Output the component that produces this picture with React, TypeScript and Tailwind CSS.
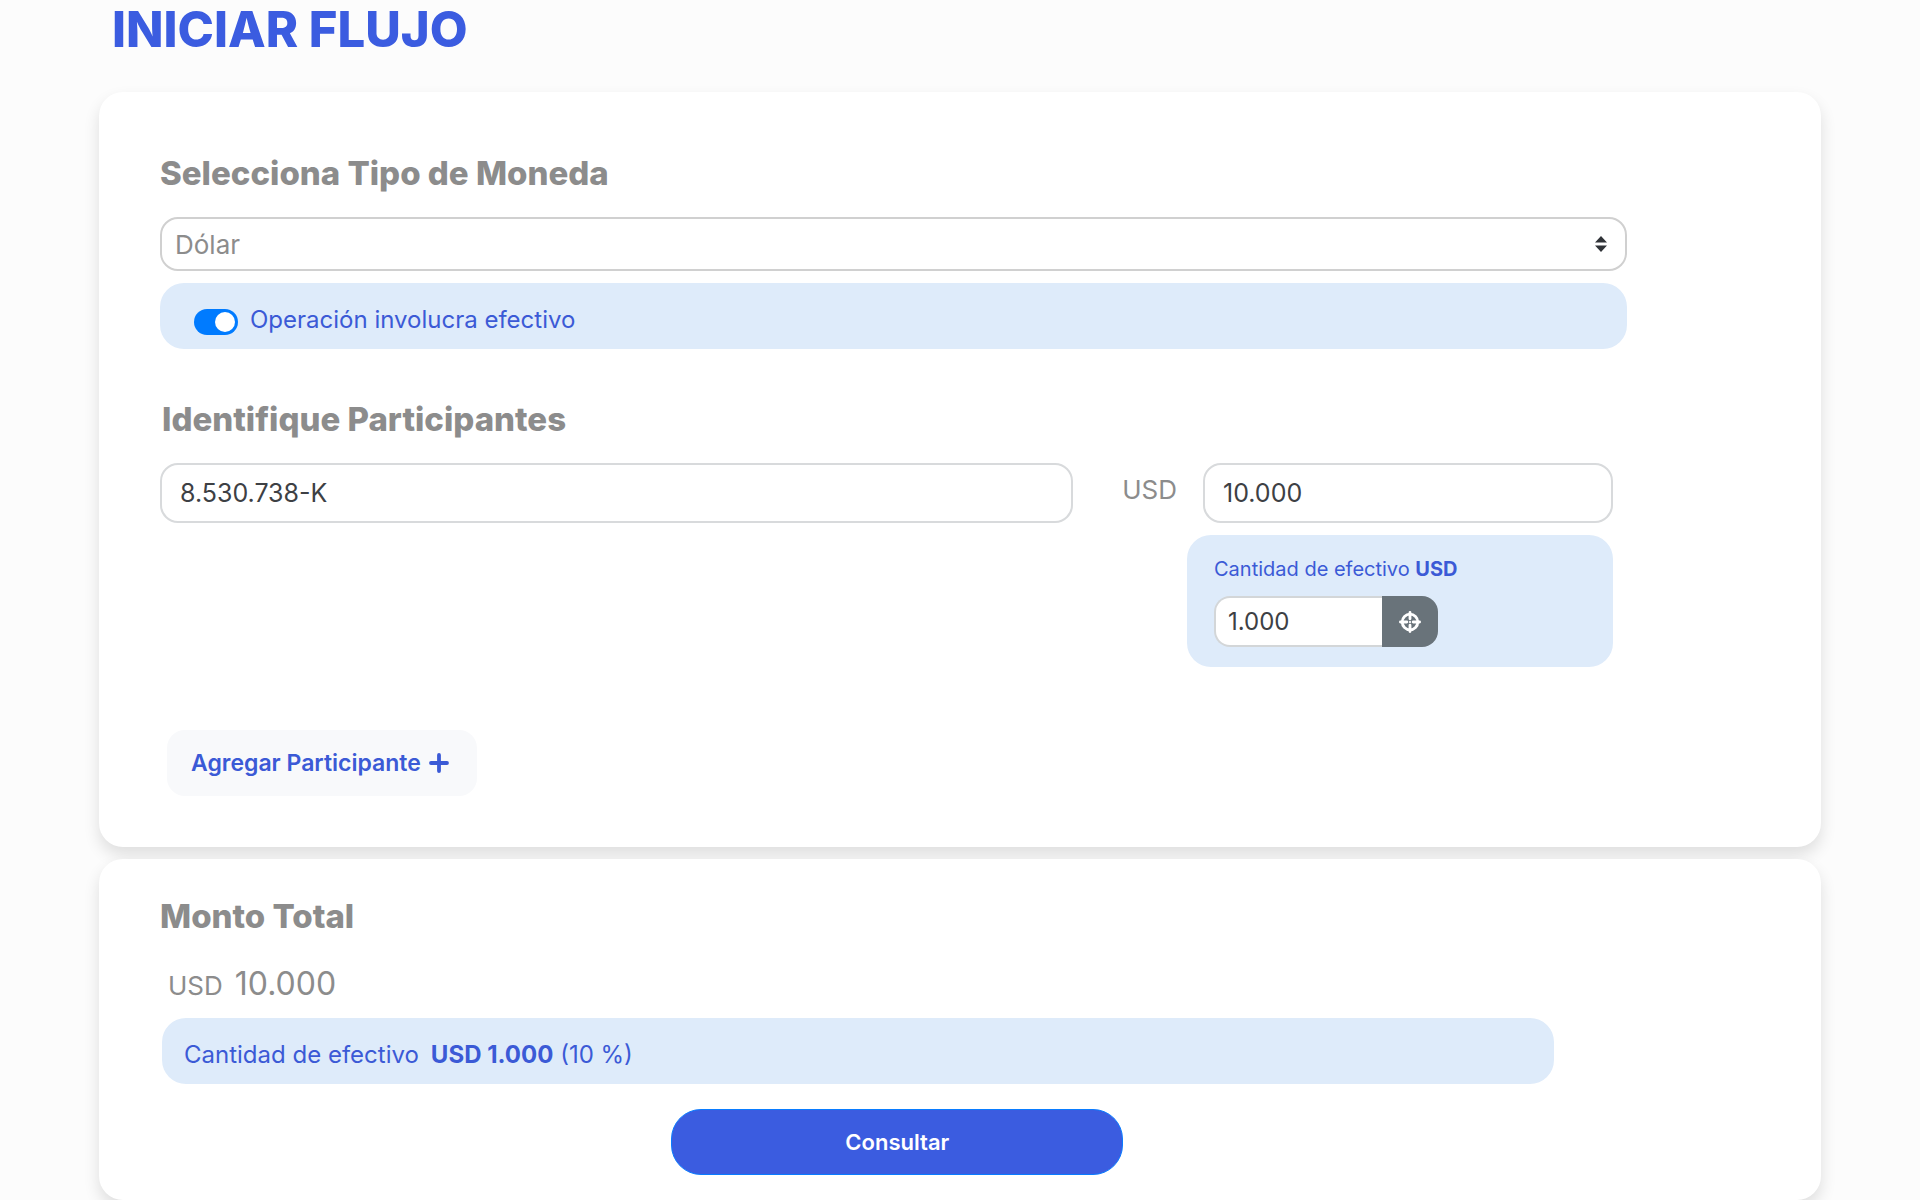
import { useState, type ReactNode } from "react";

function SectionTitle({ children }: { children: ReactNode }) {
  return <h2 className="text-[33px] leading-10 font-extrabold text-[#8c8c8c]">{children}</h2>;
}

function SortArrows() {
  return (
    <svg
      viewBox="0 0 12 16"
      className="pointer-events-none absolute top-1/2 right-5 h-4 w-3 -translate-y-1/2 fill-[#303338]"
      aria-hidden="true"
    >
      <path d="M6 0 12 6.5H0zM0 9.5h12L6 16z" />
    </svg>
  );
}

function Crosshair() {
  return (
    <svg viewBox="0 0 22 22" className="size-[22px] fill-none stroke-white" aria-hidden="true">
      <circle cx="11" cy="11" r="7.8" strokeWidth="2.8" />
      <path d="M11 1.4v6.4M11 14.2v6.4M1.4 11h6.4M14.2 11h6.4" strokeWidth="2.8" strokeLinecap="round" />
      <circle cx="11" cy="11" r=".8" className="fill-white" strokeWidth="1" />
    </svg>
  );
}

function Plus() {
  return (
    <svg viewBox="0 0 20 20" className="size-5 fill-none stroke-current" aria-hidden="true">
      <path d="M10 2v16M2 10h16" strokeWidth="3.8" strokeLinecap="round" />
    </svg>
  );
}

export default function App() {
  const [cash, setCash] = useState(true);

  return (
    <div className="min-h-screen overflow-hidden bg-[#fcfcfc] px-[99px] font-['Inter',sans-serif] text-[#8c8c8c]">
      <h1 className="pl-[13px] text-[49px] leading-[60px] font-extrabold text-[#3b5ce0]">INICIAR FLUJO</h1>

      <form onSubmit={(e) => e.preventDefault()} className="mt-8 flex flex-col gap-3">
        <section className="rounded-3xl bg-white px-[61px] pt-[61px] pb-[51px] shadow-[0_8px_16px_rgba(0,0,0,0.12)]">
          <SectionTitle>
            <label htmlFor="currency">Selecciona Tipo de Moneda</label>
          </SectionTitle>
          <div className="relative mt-6 w-11/12">
            <select
              id="currency"
              defaultValue="usd"
              className="h-[54px] w-full appearance-none rounded-[18px] border-2 border-[#d0d0d0] bg-white px-[13px] text-[26px] text-[#8c8c8c]"
            >
              <option value="usd">Dólar</option>
              <option value="clp">Peso</option>
            </select>
            <SortArrows />
          </div>
          <label className="mt-3 flex h-[66px] w-11/12 items-center gap-3 rounded-3xl bg-[#deebfa] pt-2 pl-[34px] text-2xl text-[#3b5ad6]">
            <input
              type="checkbox"
              role="switch"
              checked={cash}
              onChange={(e) => setCash(e.target.checked)}
              className="mt-1 flex h-[26px] w-11 appearance-none items-center rounded-full bg-gray-400 px-[3px] before:size-5 before:rounded-full before:bg-white checked:justify-end checked:bg-[#007bff]"
            />
            Operación involucra efectivo
          </label>

          <div className="mt-[50px] pl-[2px]">
            <SectionTitle>Identifique Participantes</SectionTitle>
          </div>
          <div className="mt-6 mr-[147px] grid grid-cols-[minmax(0,913fr)_114px_minmax(0,426fr)] items-start">
            <input
              aria-label="RUT del participante"
              defaultValue="8.530.738-K"
              className="h-[60px] w-full rounded-[18px] border-2 border-[#d8dadc] bg-white px-[18px] text-[25px] text-[#3d4044]"
            />
            <label htmlFor="amount" className="pt-[9px] pr-[10px] text-right text-[26px] leading-9">
              USD
            </label>
            <div>
              <div className="pl-4">
                <input
                  id="amount"
                  defaultValue="10.000"
                  className="h-[60px] w-full rounded-[18px] border-2 border-[#d8dadc] bg-white px-[18px] text-[25px] text-[#3d4044]"
                />
              </div>
              <div className="mt-3 h-[132px] rounded-3xl bg-[#deebfa] px-[27px] pt-5">
                <label htmlFor="cash-amount" className="block text-xl leading-7 text-[#3b5ad6]">
                  Cantidad de efectivo <b>USD</b>
                </label>
                <div className="mt-[13px] flex h-[51px]">
                  <input
                    id="cash-amount"
                    defaultValue="1.000"
                    className="w-[168px] rounded-l-2xl border-2 border-r-0 border-[#d3d6d8] bg-white px-3 text-2xl text-[#3d4044]"
                  />
                  <button
                    type="button"
                    aria-label="Usar monto total"
                    className="flex w-14 items-center justify-center rounded-r-2xl bg-[#69737a]"
                  >
                    <Crosshair />
                  </button>
                </div>
              </div>
            </div>
          </div>

          <button
            type="button"
            className="mt-[63px] ml-[7px] flex h-[66px] items-center gap-2 rounded-[18px] bg-[#f8f9fb] pr-7 pl-6 text-[23px] font-semibold text-[#3b5ad6]"
          >
            Agregar Participante
            <Plus />
          </button>
        </section>

        <section className="rounded-3xl bg-white px-[61px] pt-[37px] pb-[25px] shadow-[0_8px_16px_rgba(0,0,0,0.12)]">
          <SectionTitle>Monto Total</SectionTitle>
          <p className="mt-7 flex items-baseline gap-3 pl-2 text-[26px] leading-10">
            USD <span className="text-[32px]">10.000</span>
          </p>
          <p className="mt-3 ml-[2px] flex h-[66px] w-[87%] items-center gap-3 rounded-3xl bg-[#deebfa] pt-2 pl-[22px] text-2xl text-[#3b5ad6]">
            Cantidad de efectivo
            <span>
              <b>USD 1.000</b> (10 %)
            </span>
          </p>
          <div className="mt-[25px] flex w-11/12 justify-center pl-2">
            <button
              type="submit"
              className="h-[66px] w-[452px] rounded-[30px] border border-[#0a7cff] bg-[#3b5ce0] text-[22px] font-semibold text-white"
            >
              Consultar
            </button>
          </div>
        </section>
      </form>
    </div>
  );
}
